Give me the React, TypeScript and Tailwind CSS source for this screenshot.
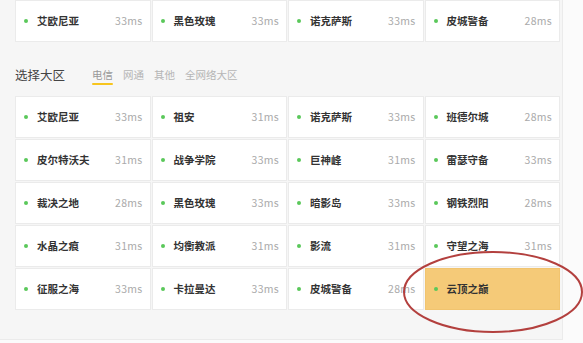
const topRow = [
  { name: "艾欧尼亚", ms: "33ms" },
  { name: "黑色玫瑰", ms: "33ms" },
  { name: "诺克萨斯", ms: "33ms" },
  { name: "皮城警备", ms: "28ms" },
];

const servers = [
  { name: "艾欧尼亚", ms: "33ms" },
  { name: "祖安", ms: "31ms" },
  { name: "诺克萨斯", ms: "33ms" },
  { name: "班德尔城", ms: "28ms" },
  { name: "皮尔特沃夫", ms: "31ms" },
  { name: "战争学院", ms: "33ms" },
  { name: "巨神峰", ms: "31ms" },
  { name: "雷瑟守备", ms: "33ms" },
  { name: "裁决之地", ms: "28ms" },
  { name: "黑色玫瑰", ms: "33ms" },
  { name: "暗影岛", ms: "33ms" },
  { name: "钢铁烈阳", ms: "28ms" },
  { name: "水晶之痕", ms: "31ms" },
  { name: "均衡教派", ms: "31ms" },
  { name: "影流", ms: "31ms" },
  { name: "守望之海", ms: "31ms" },
  { name: "征服之海", ms: "33ms" },
  { name: "卡拉曼达", ms: "33ms" },
  { name: "皮城警备", ms: "28ms" },
  { name: "云顶之巅", ms: "", active: true },
];

const tabs = ["电信", "网通", "其他", "全网络大区"];

type Server = { name: string; ms: string; active?: boolean };

function ServerCard({ server }: { server: Server }) {
  return (
    <div
      className={
        server.active
          ? "flex h-[42px] items-center border border-[#f1c46f] bg-[#f5ca78] pl-[8px] pr-[7px]"
          : "flex h-[42px] items-center border border-[#ebebeb] bg-white pl-[8px] pr-[7px]"
      }
    >
      <span className="h-[4px] w-[4px] rounded-full bg-[#5ac85a]" />
      <span className="ml-[9px] text-[10.5px] font-bold text-[#333]">
        {server.name}
      </span>
      <span className="ml-auto text-[10.5px] tracking-[0.3px] text-[#aaa]">
        {server.ms}
      </span>
    </div>
  );
}

export default function App() {
  return (
    <div
      className="relative h-[343px] w-[583px] overflow-hidden bg-[#fbfbfb]"
      style={{ fontFamily: '"Noto Sans CJK SC", "Noto Sans", sans-serif' }}
    >
      <div className="h-[340px] w-[563px] border-r border-b border-[#ebebeb] bg-[#f6f6f6] pl-[15px]">
        <div className="grid w-[545px] grid-cols-4 gap-px">
          {topRow.map((s) => (
            <ServerCard key={s.name} server={s} />
          ))}
        </div>

        <div className="mb-[13px] flex items-center pt-[25px] leading-[16px]">
          <span className="text-[12.5px] text-[#444]">选择大区</span>
          <div className="ml-[27px] flex gap-[10px] text-[10.5px] text-[#b5b5b5]">
            {tabs.map((t, i) => (
              <span
                key={t}
                className={i === 0 ? "relative text-[#999]" : "relative"}
              >
                {t}
                {i === 0 && (
                  <span className="absolute left-0 right-0 -bottom-[2px] h-[2px] rounded bg-[#f7c51e]" />
                )}
              </span>
            ))}
          </div>
        </div>

        <div className="grid w-[545px] grid-cols-4 gap-px">
          {servers.map((s, i) => (
            <ServerCard key={i} server={s} />
          ))}
        </div>
      </div>

      <svg
        className="pointer-events-none absolute left-0 top-0"
        width="583"
        height="343"
      >
        <ellipse
          cx="493"
          cy="292"
          rx="89"
          ry="40"
          fill="none"
          stroke="#b3403e"
          strokeWidth="2"
        />
      </svg>
    </div>
  );
}
